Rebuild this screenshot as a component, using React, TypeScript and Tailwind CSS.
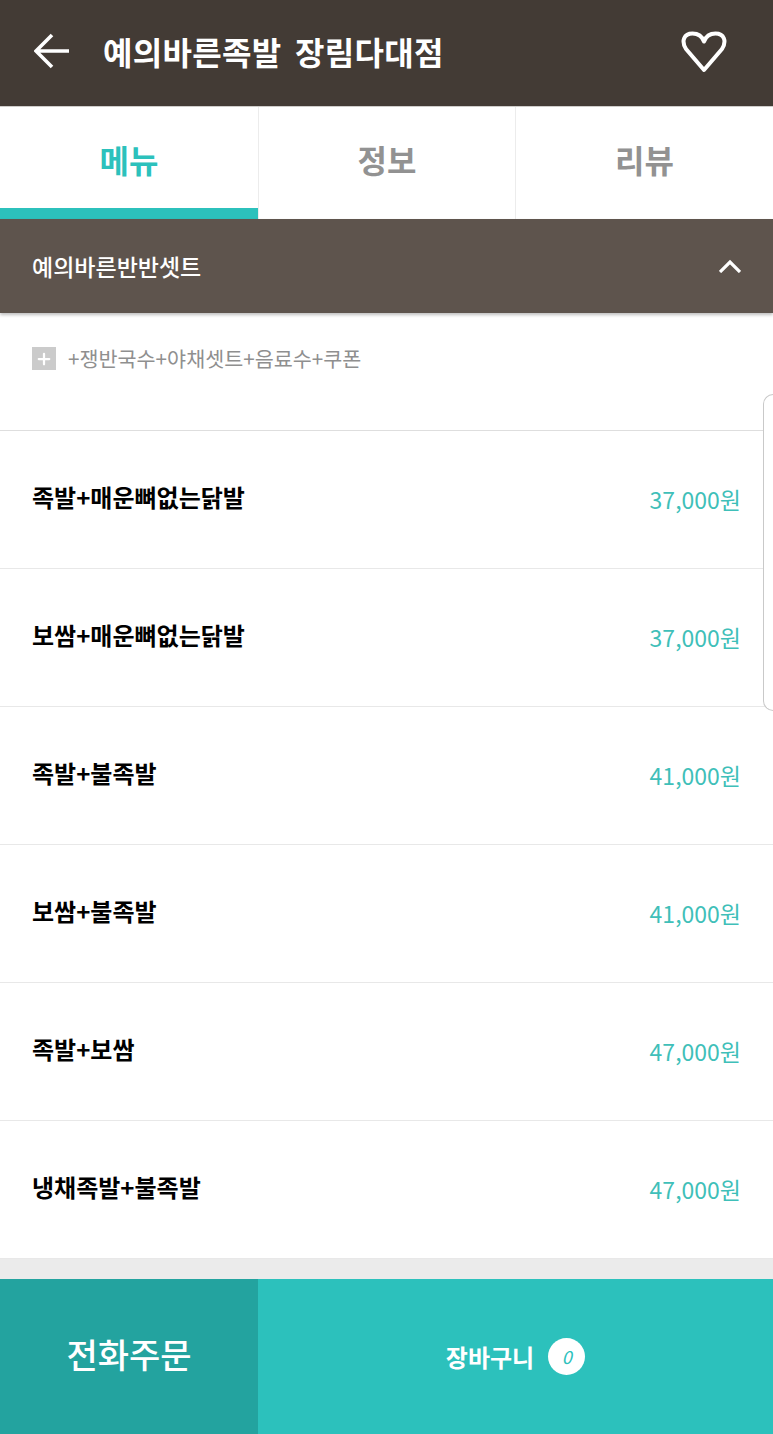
import { Plus } from 'lucide-react'

const items = [
  { name: '족발+매운뼈없는닭발', price: '37,000원' },
  { name: '보쌈+매운뼈없는닭발', price: '37,000원' },
  { name: '족발+불족발', price: '41,000원' },
  { name: '보쌈+불족발', price: '41,000원' },
  { name: '족발+보쌈', price: '47,000원' },
  { name: '냉채족발+불족발', price: '47,000원' },
]

const font = "font-['Noto_Sans_CJK_KR','Noto_Sans',sans-serif]"

export default function App() {
  return (
    <div className={`relative flex h-[1434px] w-[773px] flex-col overflow-hidden bg-white ${font}`}>
      {/* 상단 헤더 */}
      <header className="flex h-[107px] shrink-0 items-center border-b border-[#cfcdca] bg-[#433b35] pl-[34px] pr-[46px] text-white">
        <svg width="36" height="36" viewBox="0 0 36 36" fill="none" stroke="currentColor" strokeWidth="3.6" className="mb-[4px] shrink-0">
          <path d="M35 18H3M18 2L2 18L18 34" />
        </svg>
        <h1 className="mb-[4px] ml-[33px] flex-1 text-[32px] font-bold tracking-[0.3px] [word-spacing:6px]">
          예의바른족발 장림다대점
        </h1>
        <svg width="46" height="42" viewBox="0 0 46 42" fill="none" stroke="currentColor" strokeWidth="4" strokeLinejoin="round" className="mb-[3px] shrink-0">
          <path d="M23 39L5 18C0 10 3 2.500 11.500 2.500C17 2.500 21 5 23 10.500C25 5 29 2.500 34.500 2.500C43 2.500 46 10 41 18Z" />
        </svg>
      </header>

      {/* 탭 */}
      <nav className="flex h-[112px] shrink-0 text-[32px] font-bold text-[#929292]">
        <div className="flex w-[258px] items-center justify-center border-b-[11px] border-[#2cc1bc] pt-[2px] text-[#2cc1bc]">
          메뉴
        </div>
        <div className="flex w-[258px] items-center justify-center border-x border-[#ececec] pb-[9px]">정보</div>
        <div className="flex flex-1 items-center justify-center pb-[9px]">리뷰</div>
      </nav>

      {/* 카테고리 */}
      <section className="z-10 flex h-[94px] shrink-0 items-center justify-between bg-[#5e544d] pl-[32px] pr-[32px] text-white shadow-[0_2px_3px_rgba(0,0,0,0.25)]">
        <span className="text-[23px] font-medium">예의바른반반셋트</span>
        <svg width="22" height="14" viewBox="0 0 22 14" fill="none" stroke="currentColor" strokeWidth="3.2">
          <path d="M1 13L11 3L21 13" />
        </svg>
      </section>

      <div className="flex h-[118px] shrink-0 items-start border-b border-[#dedede] pl-[32px] pt-[34px]">
        <span className="flex h-[23px] w-[24px] items-center justify-center bg-[#cbcbcb] text-white">
          <Plus size={18} strokeWidth={3} />
        </span>
        <span className="ml-[12px] text-[20.7px] leading-[23px] text-[#8f8f8f]">+쟁반국수+야채셋트+음료수+쿠폰</span>
      </div>

      {/* 메뉴 목록 */}
      <ul>
        {items.map((item) => (
          <li
            key={item.name}
            className="flex h-[138px] items-center justify-between border-b border-[#e8e8e8] px-[32px]"
          >
            <span className="mb-[5px] text-[24px] font-bold text-black">{item.name}</span>
            <span className="text-[23px] text-[#3fbfb9]">{item.price}</span>
          </li>
        ))}
      </ul>

      <div className="h-[20px] shrink-0 bg-[#ebebeb]" />

      {/* 하단 버튼 */}
      <footer className="flex flex-1 text-white">
        <div className="flex w-[258px] items-center justify-center bg-[#23a39f] pb-[6px] text-[34px] font-medium">
          전화주문
        </div>
        <div className="flex flex-1 items-center justify-center gap-[14px] bg-[#2cc1bc]">
          <span className="text-[24px] font-bold">장바구니</span>
          <span className="flex h-[37px] w-[37px] items-center justify-center rounded-full bg-white text-[18px] italic text-[#2cc1bc]">
            0
          </span>
        </div>
      </footer>

      {/* 스크롤 핸들 */}
      <div className="absolute right-0 top-[394px] h-[317px] w-[10px] rounded-l-[10px] border-y border-l border-[#c9c9c9] bg-white" />
    </div>
  )
}
